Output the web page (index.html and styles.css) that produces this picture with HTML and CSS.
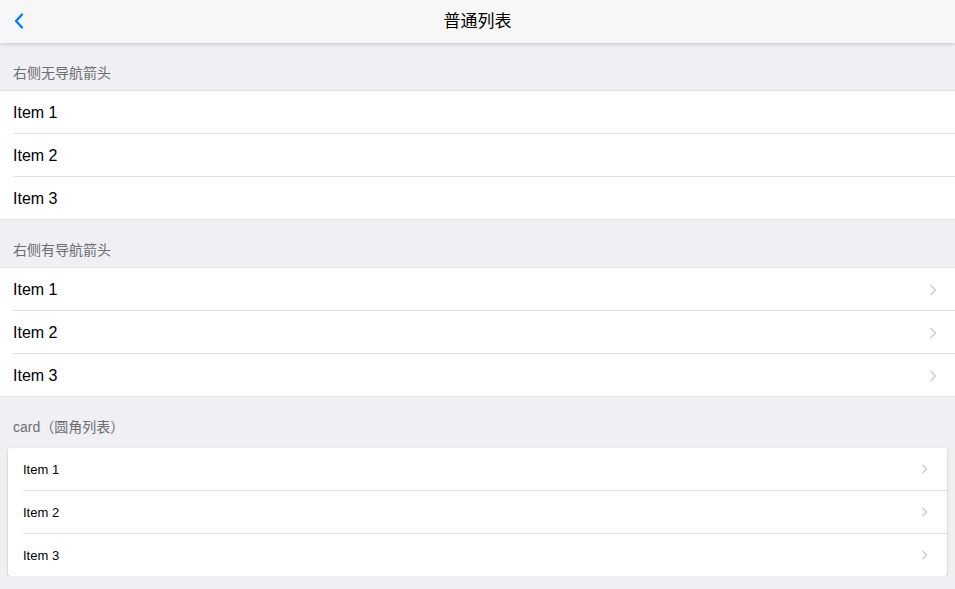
FILE: index.html
```html
<!DOCTYPE html>
<html>

<head>
  <title>普通列表</title>
  <link rel="stylesheet" href="styles.css">
</head>

<body>
  <div class="navbar">
    <a class="back">
      <svg width="10" height="16" viewBox="0 0 10 16">
        <path d="M8 1.5 L2 8 L8 14.5" fill="none" stroke="#007aff" stroke-width="2.2" stroke-linecap="round" stroke-linejoin="round" />
      </svg>
    </a>
    <div class="title">普通列表</div>
  </div>

  <div class="content">
    <div class="section-title">右侧无导航箭头</div>
    <ul class="list">
      <li class="item"><span>Item 1</span></li>
      <li class="item"><span>Item 2</span></li>
      <li class="item"><span>Item 3</span></li>
    </ul>

    <div class="section-title">右侧有导航箭头</div>
    <ul class="list">
      <li class="item link"><span>Item 1</span>
        <svg class="arrow" width="8" height="12" viewBox="0 0 8 12"><path d="M1.5 1 L6.5 6 L1.5 11" /></svg>
      </li>
      <li class="item link"><span>Item 2</span>
        <svg class="arrow" width="8" height="12" viewBox="0 0 8 12"><path d="M1.5 1 L6.5 6 L1.5 11" /></svg>
      </li>
      <li class="item link"><span>Item 3</span>
        <svg class="arrow" width="8" height="12" viewBox="0 0 8 12"><path d="M1.5 1 L6.5 6 L1.5 11" /></svg>
      </li>
    </ul>

    <div class="section-title">card（圆角列表）</div>
    <ul class="list card">
      <li class="item link"><span>Item 1</span>
        <svg class="arrow" width="7" height="10" viewBox="0 0 7 10"><path d="M1.5 1 L5.5 5 L1.5 9" /></svg>
      </li>
      <li class="item link"><span>Item 2</span>
        <svg class="arrow" width="7" height="10" viewBox="0 0 7 10"><path d="M1.5 1 L5.5 5 L1.5 9" /></svg>
      </li>
      <li class="item link"><span>Item 3</span>
        <svg class="arrow" width="7" height="10" viewBox="0 0 7 10"><path d="M1.5 1 L5.5 5 L1.5 9" /></svg>
      </li>
    </ul>
  </div>
</body>

</html>
```

FILE: styles.css
```css
* {
  box-sizing: border-box;
}

body {
  margin: 0;
  background-color: #efeff4;
  font-family: "Liberation Sans", Arial, "Noto Sans CJK SC", sans-serif;
  color: #000;
}

/* Top bar */
.navbar {
  height: 43px;
  padding-bottom: 4px;
  background-color: #f7f7f7;
  box-shadow: 0 1px 4px rgba(0, 0, 0, 0.18);
  display: flex;
  align-items: center;
  justify-content: center;
  position: relative;
  z-index: 1;
}

.navbar .back {
  position: absolute;
  left: 14px;
  top: 13px;
  display: flex;
}

.navbar .title {
  font-size: 17px;
  color: #000;
}

.content {
  padding-top: 19px;
}

/* Section headers */
.section-title {
  padding: 1px 13px 0;
  height: 28px;
  font-size: 14px;
  color: #6d6d72;
  line-height: 20px;
}

.list {
  list-style: none;
  margin: 0 0 19px;
  padding: 0;
  background-color: #fff;
  border-top: 1px solid #e1e1e1;
  border-bottom: 1px solid #e1e1e1;
}

.item {
  height: 43px;
  margin-left: 13px;
  padding-top: 1px;
  padding-right: 18px;
  display: flex;
  align-items: center;
  justify-content: space-between;
  font-size: 16px;
  border-top: 1px solid #e1e1e1;
}

.item:first-child {
  border-top: none;
  height: 42px;
}

.arrow path {
  fill: none;
  stroke: #c7c7cc;
  stroke-width: 1.2;
}

/* Rounded card list */
.card {
  margin: 4px 8px 0;
  border: none;
  border-radius: 2px;
  box-shadow: 0 1px 2px rgba(0, 0, 0, 0.3);
}

.card .item {
  margin-left: 15px;
  padding-top: 0;
  font-size: 13px;
  padding-right: 19px;
}
```
